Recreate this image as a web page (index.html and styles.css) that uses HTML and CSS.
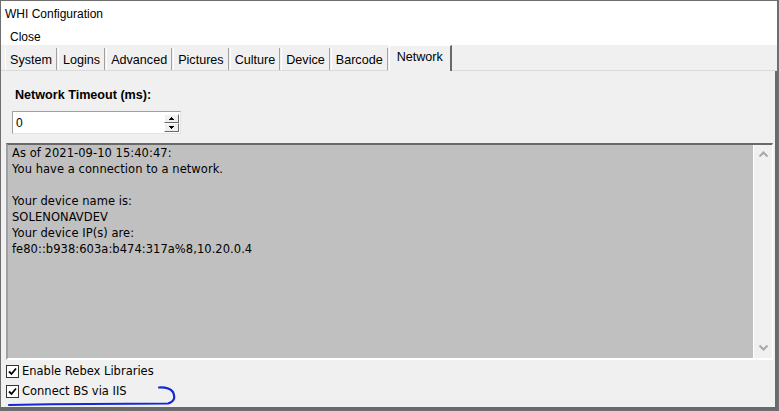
FILE: index.html
```html
<!DOCTYPE html>
<html>
<head>
<meta charset="utf-8">
<link rel="stylesheet" href="styles.css">
</head>
<body>
<div class="window">
  <div class="titlebar">WHI Configuration</div>
  <div class="menubar"><span class="menu-item">Close</span></div>
  <div class="tabstrip">
    <div class="tab">System</div>
    <div class="tab">Logins</div>
    <div class="tab">Advanced</div>
    <div class="tab">Pictures</div>
    <div class="tab">Culture</div>
    <div class="tab">Device</div>
    <div class="tab">Barcode</div>
    <div class="tab tab-active">Network</div>
  </div>
  <div class="panel">
    <div class="field-label">Network Timeout (ms):</div>
    <div class="spinner">
      <div class="spinner-value">0</div>
      <div class="spinner-buttons">
        <div class="spin-btn"><svg width="5" height="3" viewBox="0 0 5 3"><path d="M2 0h1v1h1v1h1v1H0V2h1V1h1z" fill="#000"/></svg></div>
        <div class="spin-btn"><svg width="5" height="3" viewBox="0 0 5 3"><path d="M0 0h5v1H4v1H3v1H2V2H1V1H0z" fill="#000"/></svg></div>
      </div>
    </div>
    <div class="textbox">
      <div class="textbox-text">As of 2021-09-10 15:40:47:<br>You have a connection to a network.<br><br>Your device name is:<br>SOLENONAVDEV<br>Your device IP(s) are:<br>fe80::b938:603a:b474:317a%8,10.20.0.4</div>
      <div class="scrollbar">
        <svg class="arrow" width="9" height="6" viewBox="0 0 9 6"><path d="M0.5 5.5L4.5 1.5L8.5 5.5" fill="none" stroke="#a8a8a8" stroke-width="2"/></svg>
        <svg class="arrow" width="9" height="6" viewBox="0 0 9 6"><path d="M0.5 0.5L4.5 4.5L8.5 0.5" fill="none" stroke="#a8a8a8" stroke-width="2"/></svg>
      </div>
    </div>
    <div class="checks">
      <label class="check"><span class="box"><svg width="9" height="9" viewBox="0 0 9 9"><path d="M1 4.5L3.5 7L8 1.5" fill="none" stroke="#000" stroke-width="1.8"/></svg></span>Enable Rebex Libraries</label>
      <label class="check"><span class="box"><svg width="9" height="9" viewBox="0 0 9 9"><path d="M1 4.5L3.5 7L8 1.5" fill="none" stroke="#000" stroke-width="1.8"/></svg></span>Connect BS via IIS</label>
    </div>
    <svg class="scribble" width="180" height="24" viewBox="0 0 180 24"><path d="M8 19 Q 90 17.5 167 17.5 Q 176 15 172 6 Q 168 1 158 1.5" fill="none" stroke="#1428d8" stroke-width="2.2" stroke-linecap="round"/></svg>
  </div>
</div>
</body>
</html>
```

FILE: styles.css
```css
* { box-sizing: border-box; }
html, body { margin: 0; padding: 0; background: #ffffff; }
.window {
  width: 779px;
  height: 411px;
  border: 1px solid #6e6e6e;
  border-right-width: 2px;
  display: flex;
  flex-direction: column;
  font-family: "Liberation Sans", Arial, sans-serif;
  font-size: 12px;
  color: #000;
  background: #fff;
}
.titlebar {
  height: 26px;
  padding: 6px 0 0 4px;
  font-size: 12px;
  line-height: 14px;
}
.menubar {
  height: 18px;
  padding: 2px 0 0 9px;
  line-height: 16px;
}
.tabstrip {
  height: 26px;
  background: #f0f0f0;
  display: flex;
  align-items: flex-end;
  gap: 1px;
  padding-left: 4px;
  border-bottom: 1px solid #dadada;
}
.tab {
  height: 22px;
  padding: 4px 4px 0 4px;
  line-height: 16px;
  font-size: 12.6px;
  border-left: 1px solid #ffffff;
  border-right: 1px solid #a0a0a0;
  white-space: nowrap;
}
.tab-active {
  height: 26px;
  margin-bottom: -1px;
  padding: 3px 7px 0 7px;
  background: #f0f0f0;
  border-top: 1px solid #ffffff;
  border-right: 2px solid #696969;
  position: relative;
  z-index: 1;
}
.panel {
  flex: 1;
  background: #f0f0f0;
  border-right: 2px solid #696969;
  border-bottom: 3px solid #696969;
  padding: 15px 4px 0 5px;
  display: flex;
  flex-direction: column;
  position: relative;
}
.field-label {
  font-weight: bold;
  font-size: 12.6px;
  padding: 1px 0 0 9px;
  line-height: 16px;
  height: 25px;
}
.spinner {
  margin-left: 6px;
  width: 169px;
  height: 23px;
  background: #fff;
  border: 1px solid #a0a0a0;
  border-right-color: #e3e3e3;
  border-bottom-color: #e3e3e3;
  display: flex;
  align-items: center;
  justify-content: space-between;
  padding: 0 1px 0 3px;
}
.spinner-value { line-height: 16px; }
.spinner-buttons {
  display: flex;
  flex-direction: column;
}
.spin-btn {
  width: 15px;
  height: 9px;
  background: #f0f0f0;
  border: 1px solid #ffffff;
  border-right-color: #696969;
  border-bottom-color: #696969;
  display: flex;
  align-items: center;
  justify-content: center;
}
.textbox {
  margin-top: 9px;
  width: 767px;
  height: 217px;
  background: #c0c0c0;
  border-top: 2px solid #696969;
  border-left: 2px solid #a0a0a0;
  border-right: 1px solid #ffffff;
  border-bottom: 2px solid #ffffff;
  display: flex;
}
.textbox-text {
  flex: 1;
  padding: 0 0 0 4px;
  line-height: 16px;
  font-family: "DejaVu Sans", sans-serif;
  font-size: 11.5px;
  letter-spacing: 0.05px;
}
.scrollbar {
  width: 19px;
  background: #f0f0f0;
  border-left: 1px solid #ffffff;
  display: flex;
  flex-direction: column;
  justify-content: space-between;
  align-items: center;
  padding: 6px 0 7px 0;
}
.checks {
  display: flex;
  flex-direction: column;
  padding-top: 1px;
}
.check {
  display: flex;
  align-items: center;
  height: 20px;
  gap: 3px;
  padding-left: 0;
  font-family: "DejaVu Sans", sans-serif;
  font-size: 11.5px;
}
.box {
  width: 13px;
  height: 13px;
  border: 1px solid #333;
  background: #fff;
  display: flex;
  align-items: center;
  justify-content: center;
}
.scribble {
  position: absolute;
  left: 0;
  top: 315px;
}
```
